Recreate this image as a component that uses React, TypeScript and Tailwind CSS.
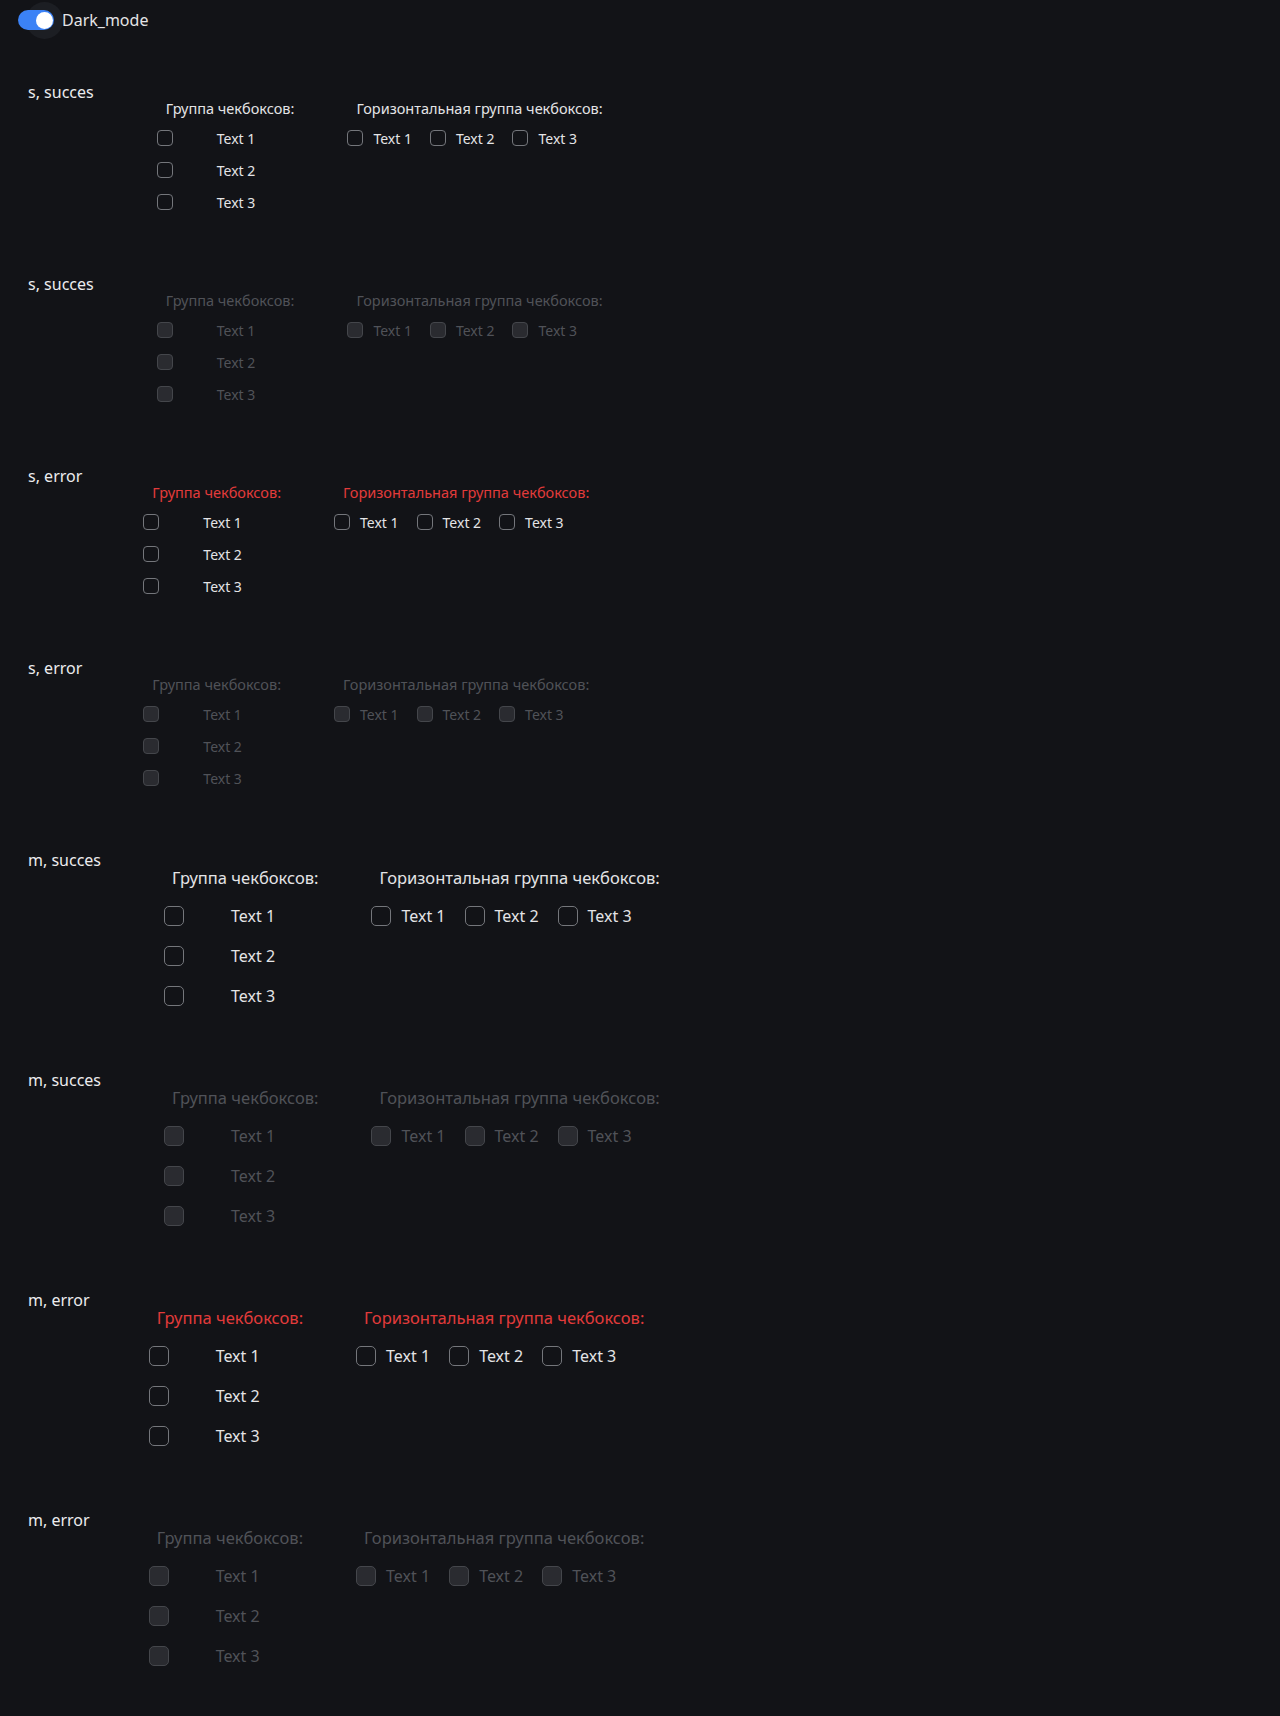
import React, { useState } from 'react';

type Size = 's' | 'm';

interface Variant {
  label: string;
  size: Size;
  error: boolean;
  disabled: boolean;
}

const variants: Variant[] = [
  { label: 's, succes', size: 's', error: false, disabled: false },
  { label: 's, succes', size: 's', error: false, disabled: true },
  { label: 's, error', size: 's', error: true, disabled: false },
  { label: 's, error', size: 's', error: true, disabled: true },
  { label: 'm, succes', size: 'm', error: false, disabled: false },
  { label: 'm, succes', size: 'm', error: false, disabled: true },
  { label: 'm, error', size: 'm', error: true, disabled: false },
  { label: 'm, error', size: 'm', error: true, disabled: true },
];

const items = ['Text 1', 'Text 2', 'Text 3'];

const Box = ({ size, disabled }: { size: Size; disabled: boolean }) => {
  const dims = size === 's' ? 'w-4 h-4 rounded-[4px]' : 'w-5 h-5 rounded-[5px]';
  const look = disabled ? 'bg-[#2a2b30] border-[#44464b]' : 'bg-transparent border-[#74767b]';
  return <span className={`shrink-0 border ${dims} ${look}`} />;
};

const CheckboxGroups = ({ v }: { v: Variant }) => {
  const s = v.size === 's';
  const titleColor = v.disabled ? 'text-[#505258]' : v.error ? 'text-[#e23b3b]' : 'text-[#e4e4e6]';
  const textColor = v.disabled ? 'text-[#505258]' : 'text-[#e4e4e6]';
  const titleCls = s
    ? 'text-[14.5px] leading-[20px] mb-[4px] pl-[9px]'
    : 'text-[16.5px] leading-[22px] mb-[7px] pl-[8px]';
  const rowH = s ? 'h-[32px]' : 'h-[40px]';
  const textSize = s ? 'text-[14px]' : 'text-[16px]';

  return (
    <div className={`flex items-start gap-[53px] ${s ? 'mt-[18px]' : 'mt-[19px]'}`}>
      {/* вертикальная группа */}
      <div className="flex flex-col">
        <div className={`${titleCls} ${titleColor}`}>Группа чекбоксов:</div>
        {items.map((t) => (
          <div key={t} className={`flex items-center ${rowH}`}>
            <Box size={v.size} disabled={v.disabled} />
            <span className={`${s ? 'ml-[44px]' : 'ml-[47px]'} ${textSize} ${textColor}`}>{t}</span>
          </div>
        ))}
      </div>

      {/* горизонтальная группа */}
      <div className="flex flex-col">
        <div className={`${titleCls} ${titleColor}`}>Горизонтальная группа чекбоксов:</div>
        <div className={`flex items-center ${rowH} ${s ? 'gap-[18px]' : 'gap-[19px]'}`}>
          {items.map((t) => (
            <div key={t} className="flex items-center">
              <Box size={v.size} disabled={v.disabled} />
              <span className={`ml-[10px] ${textSize} ${textColor}`}>{t}</span>
            </div>
          ))}
        </div>
      </div>
    </div>
  );
};

export default function App() {
  const [dark, setDark] = useState(true);

  return (
    <div
      className="min-h-screen w-full bg-[#121317] text-[#e4e4e6] pb-10"
      style={{ fontFamily: '"Noto Sans", "Open Sans", sans-serif' }}
    >
      <div className="flex items-center pl-[18px] pt-[10px] h-[30px]">
        <button
          onClick={() => setDark(!dark)}
          className="relative w-[36px] h-[20px] shrink-0"
        >
          <span className="absolute left-[8px] top-[-8.5px] w-[37px] h-[37px] rounded-full bg-[#1c1e23]" />
          <span className={`absolute inset-0 rounded-full ${dark ? 'bg-[#3b82f6]' : 'bg-[#5a5c62]'}`} />
          <span className="absolute right-[1px] top-[1.5px] w-[17px] h-[17px] rounded-full bg-white" />
        </button>
        <span className="ml-[8px] text-[16px] leading-[20px] text-[#e4e4e6] relative">Dark_mode</span>
      </div>

      <div className="pl-[28px] pt-[50px] flex flex-col">
        {variants.map((v, i) => (
          <div
            key={i}
            className={`flex items-start ${v.size === 's' ? 'mb-[54px]' : 'mb-[52px]'}`}
          >
            <div
              className={`text-[16px] leading-[24px] text-[#ececee] whitespace-nowrap ${
                v.error ? (v.size === 's' ? 'mr-[61px]' : 'mr-[59px]') : 'mr-[63px]'
              }`}
            >
              {v.label}
            </div>
            <CheckboxGroups v={v} />
          </div>
        ))}
      </div>
    </div>
  );
}
